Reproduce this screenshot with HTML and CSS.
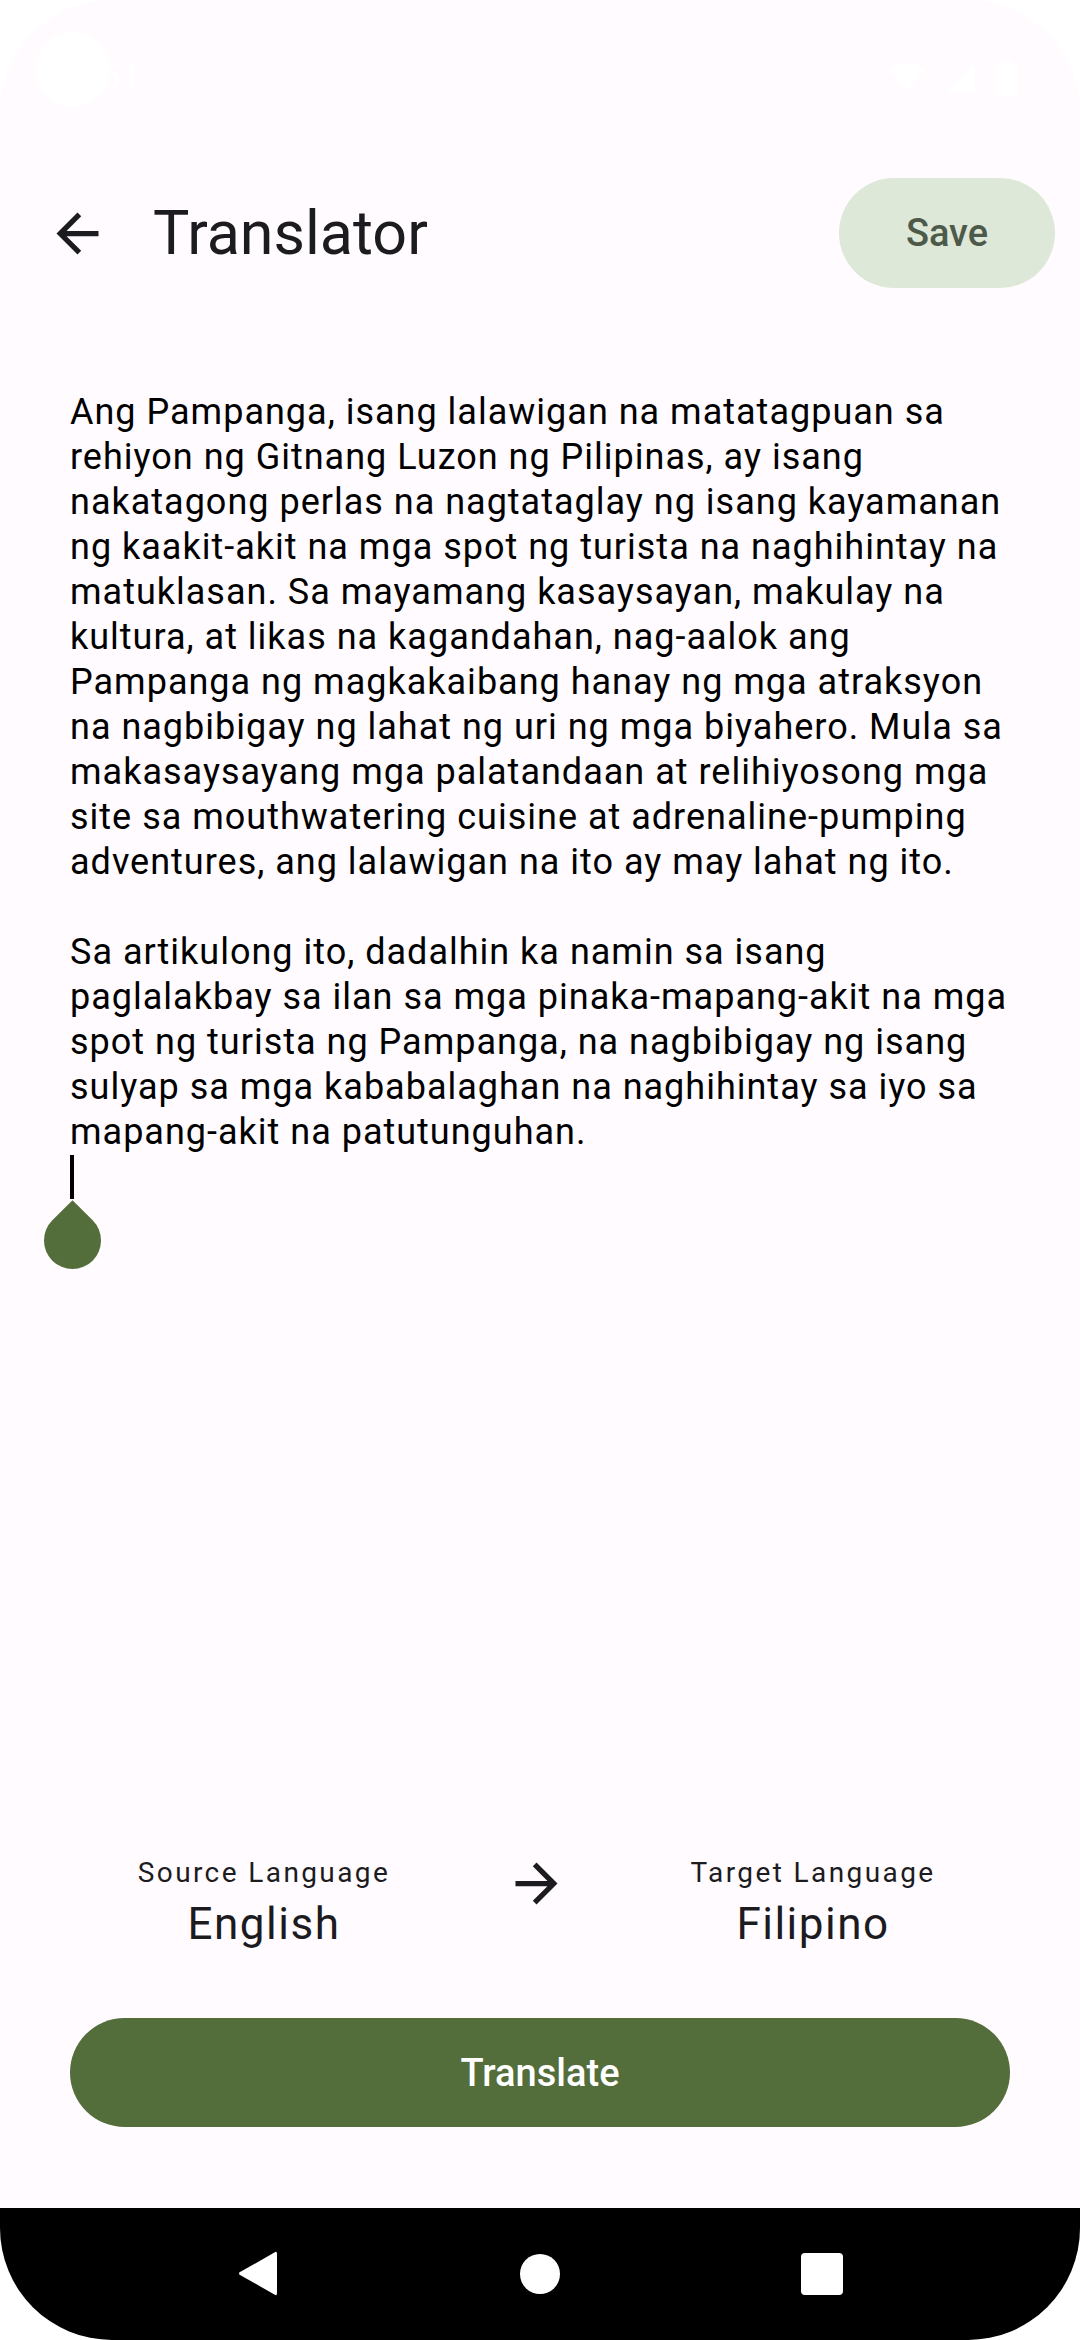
FILE: index.html
```html
<!DOCTYPE html>
<html lang="tl">
<head>
<meta charset="utf-8">
<title>Translator</title>
<link rel="stylesheet" href="styles.css">
</head>
<body>
<div class="screen">
  <div class="status-bar">
    <span class="clock">12:51</span>
    <span class="camera"></span>
    <div class="status-icons">
      <svg class="si-wifi" viewBox="0 0 24 24"><path d="M12 21L0.6 7.4C3.7 4.9 7.7 3.5 12 3.5s8.3 1.4 11.4 3.9z"/></svg>
      <svg class="si-signal" viewBox="0 0 24 24"><path d="M2 22L22 2v20z"/></svg>
      <svg class="si-battery" viewBox="0 0 14 24"><path d="M4 1h6v2h2.5c.8 0 1.5.7 1.5 1.5v18c0 .8-.7 1.5-1.5 1.5h-11C.7 24 0 23.3 0 22.5v-18C0 3.7.7 3 1.5 3H4z"/></svg>
    </div>
  </div>

  <header class="app-bar">
    <button class="icon-btn" aria-label="Back">
      <svg viewBox="0 0 24 24"><path d="M20 11H7.83l5.59-5.59L12 4l-8 8 8 8 1.41-1.41L7.83 13H20v-2z"/></svg>
    </button>
    <h1 class="title">Translator</h1>
    <button class="save-btn">Save</button>
  </header>

  <main class="editor">
    <p>Ang Pampanga, isang lalawigan na matatagpuan sa rehiyon ng Gitnang Luzon ng Pilipinas, ay isang nakatagong perlas na nagtataglay ng isang kayamanan ng kaakit-akit na mga spot ng turista na naghihintay na matuklasan. Sa mayamang kasaysayan, makulay na kultura, at likas na kagandahan, nag-aalok ang Pampanga ng magkakaibang hanay ng mga atraksyon na nagbibigay ng lahat ng uri ng mga biyahero. Mula sa makasaysayang mga palatandaan at relihiyosong mga site sa mouthwatering cuisine at adrenaline-pumping adventures, ang lalawigan na ito ay may lahat ng ito.</p>
    <p>Sa artikulong ito, dadalhin ka namin sa isang paglalakbay sa ilan sa mga pinaka-mapang-akit na mga spot ng turista ng Pampanga, na nagbibigay ng isang sulyap sa mga kababalaghan na naghihintay sa iyo sa mapang-akit na patutunguhan.</p>
    <div class="caret"><span class="handle"></span></div>
  </main>

  <section class="languages">
    <div class="lang">
      <div class="lang-label">Source Language</div>
      <div class="lang-name">English</div>
    </div>
    <svg class="swap-arrow" viewBox="0 0 24 24"><path d="M12 4l-1.41 1.41L16.17 11H4v2h12.17l-5.58 5.59L12 20l8-8z"/></svg>
    <div class="lang">
      <div class="lang-label">Target Language</div>
      <div class="lang-name">Filipino</div>
    </div>
  </section>

  <button class="translate-btn">Translate</button>

  <nav class="nav-bar">
    <span class="nav-back"></span>
    <span class="nav-home"></span>
    <span class="nav-recents"></span>
  </nav>
</div>
</body>
</html>
```

FILE: styles.css
```css
* { box-sizing: border-box; }

html, body {
  margin: 0;
  padding: 0;
  background: #ffffff;
}

body {
  font-family: Roboto, "Noto Sans", "Liberation Sans", sans-serif;
  color: #1c1b1f;
}

.screen {
  width: 1080px;
  height: 2340px;
  background: #fffbfe;
  border-radius: 112px;
  overflow: hidden;
  display: flex;
  flex-direction: column;
}

/* status bar */
.status-bar {
  position: relative;
  height: 140px;
  flex: none;
  display: flex;
  align-items: flex-start;
  justify-content: space-between;
  padding: 52px 62px 0 49px;
}

.clock {
  color: #ffffff;
  font-size: 37px;
  line-height: 50px;
}

.camera {
  position: absolute;
  left: 35px;
  top: 32px;
  width: 75px;
  height: 75px;
  border-radius: 50%;
  background: #ffffff;
}

.status-icons {
  display: flex;
  align-items: center;
  gap: 18px;
  margin-top: 6px;
  fill: #ffffff;
}

.si-wifi { width: 38px; height: 38px; }
.si-signal { width: 34px; height: 34px; }
.si-battery { width: 22px; height: 36px; }

/* app bar */
.app-bar {
  height: 186px;
  flex: none;
  display: flex;
  align-items: center;
  padding: 0 25px 0 46px;
}

.icon-btn {
  width: 63px;
  height: 63px;
  padding: 0;
  border: 0;
  background: none;
  fill: #1c1b1f;
}

.icon-btn svg {
  display: block;
  width: 63px;
  height: 63px;
}

.title {
  flex: 1;
  margin: 0 0 0 44px;
  font-size: 61px;
  font-weight: 400;
  line-height: 80px;
  color: #1c1b1f;
}

.save-btn {
  width: 216px;
  height: 110px;
  border: 0;
  border-radius: 55px;
  background: #dee8d9;
  color: #4e5a49;
  font-family: Roboto, sans-serif;
  font-size: 38px;
  font-weight: 500;
}

/* editor */
.editor {
  flex: 1;
  padding: 64px 70px 0;
  font-size: 36px;
  line-height: 45px;
  letter-spacing: 1px;
  color: #000000;
}

.editor p {
  margin: 0;
}

.editor p + p {
  margin-top: 45px;
}

.caret {
  position: relative;
  width: 4px;
  height: 44px;
  background: #000000;
}

.handle {
  position: absolute;
  left: -26px;
  top: 57px;
  width: 57px;
  height: 57px;
  background: #536e3b;
  border-radius: 0 50% 50% 50%;
  transform: rotate(45deg);
}

/* languages */
.languages {
  flex: none;
  display: flex;
  align-items: flex-start;
  padding-left: 114px;
  margin-bottom: 68px;
}

.lang {
  width: 300px;
  text-align: center;
  color: #1c1b1f;
}

.lang-label {
  font-size: 28px;
  line-height: 36px;
  letter-spacing: 2.4px;
}

.lang-name {
  margin-top: 7px;
  font-size: 44px;
  line-height: 52px;
  letter-spacing: 1.5px;
}

.swap-arrow {
  width: 63px;
  height: 63px;
  margin: -3px 95px 0 91px;
  fill: #1c1b1f;
}

/* translate */
.translate-btn {
  flex: none;
  height: 109px;
  margin: 0 70px 81px;
  border: 0;
  border-radius: 55px;
  background: #536e3b;
  color: #ffffff;
  font-family: Roboto, sans-serif;
  font-size: 38px;
  font-weight: 500;
}

/* navigation */
.nav-bar {
  flex: none;
  height: 132px;
  background: #000000;
  display: flex;
  align-items: center;
  justify-content: center;
  gap: 222px;
}

.nav-bar span {
  display: block;
  width: 60px;
  height: 60px;
  position: relative;
}

.nav-back::before {
  content: "";
  position: absolute;
  left: 10px;
  top: 7px;
  width: 39px;
  height: 45px;
  background: #ffffff;
  clip-path: polygon(100% 0, 100% 100%, 3% 52%, 3% 48%);
  border-radius: 3px;
}

.nav-home::before {
  content: "";
  position: absolute;
  left: 10px;
  top: 10px;
  width: 40px;
  height: 40px;
  border-radius: 50%;
  background: #ffffff;
}

.nav-recents::before {
  content: "";
  position: absolute;
  left: 9px;
  top: 9px;
  width: 42px;
  height: 42px;
  border-radius: 4px;
  background: #ffffff;
}
```
